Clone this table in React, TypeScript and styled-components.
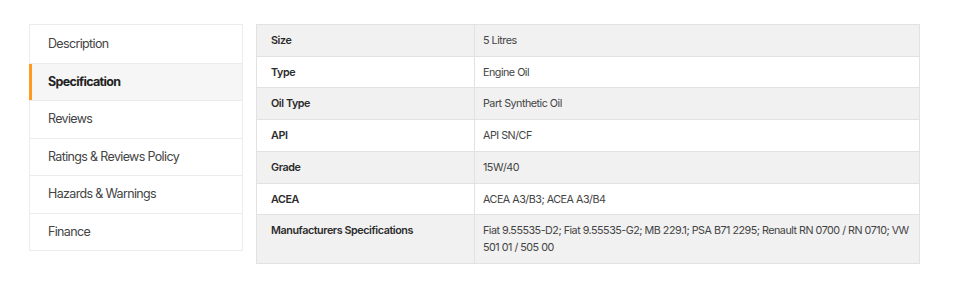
import React from 'react'
import styled, { createGlobalStyle } from 'styled-components'

const GlobalStyle = createGlobalStyle`
  body {
    margin: 0;
    background: #fff;
    font-family: Inter, "Liberation Sans", sans-serif;
    color: #333;
  }
`

const Page = styled.div`
  display: flex;
  align-items: flex-start;
  gap: 13px;
  padding: 24px 0 0 29px;
`

const TabList = styled.ul`
  list-style: none;
  margin: 0;
  padding: 0;
  width: 214px;
  border: 1px solid #ececec;
  box-sizing: border-box;
`

const TabItem = styled.li<{ $active?: boolean }>`
  position: relative;
  height: 37.5px;
  display: flex;
  align-items: center;
  padding: 0 0 1px 18px;
  font-size: 12.5px;
  letter-spacing: -0.65px;
  font-weight: ${({ $active }) => ($active ? 700 : 400)};
  color: ${({ $active }) => ($active ? '#222' : '#444')};
  background: ${({ $active }) => ($active ? '#f6f6f6' : '#fff')};
  box-sizing: border-box;

  & + & {
    border-top: 1px solid #ececec;
  }

  ${({ $active }) =>
    $active &&
    `
    &:before {
      content: '';
      position: absolute;
      left: -1px;
      top: 0;
      bottom: 0;
      width: 3px;
      background: #ff9a1f;
    }
  `}
`

const SpecTable = styled.table`
  width: 664px;
  border-collapse: collapse;
  font-size: 10.75px;
  line-height: 16.7px;
  letter-spacing: -0.42px;
`

const Row = styled.tr<{ $shaded: boolean }>`
  background: ${({ $shaded }) => ($shaded ? '#f1f1f1' : '#fff')};
`

const Label = styled.th`
  width: 218px;
  box-sizing: border-box;
  text-align: left;
  vertical-align: top;
  font-weight: 600;
  color: #2b2b2b;
  padding: 8px 14px 6px;
  border: 1px solid #e2e2e2;
`

const Value = styled.td`
  vertical-align: top;
  color: #444;
  letter-spacing: -0.5px;
  padding: 8px 4px 6px 8px;
  border: 1px solid #e2e2e2;
`

const tabs = [
  'Description',
  'Specification',
  'Reviews',
  'Ratings & Reviews Policy',
  'Hazards & Warnings',
  'Finance',
]

const specs: [string, string][] = [
  ['Size', '5 Litres'],
  ['Type', 'Engine Oil'],
  ['Oil Type', 'Part Synthetic Oil'],
  ['API', 'API SN/CF'],
  ['Grade', '15W/40'],
  ['ACEA', 'ACEA A3/B3; ACEA A3/B4'],
  [
    'Manufacturers Specifications',
    'Fiat 9.55535-D2; Fiat 9.55535-G2; MB 229.1; PSA B71 2295; Renault RN 0700 / RN 0710; VW 501 01 / 505 00',
  ],
]

const App = () => {
  return (
    <>
      <GlobalStyle />
      <Page>
        <TabList>
          {tabs.map((tab) => (
            <TabItem key={tab} $active={tab === 'Specification'}>
              {tab}
            </TabItem>
          ))}
        </TabList>
        <SpecTable>
          <tbody>
            {specs.map(([label, value], i) => (
              <Row key={label} $shaded={i % 2 === 0}>
                <Label>{label}</Label>
                <Value>{value}</Value>
              </Row>
            ))}
          </tbody>
        </SpecTable>
      </Page>
    </>
  )
}

export default App
